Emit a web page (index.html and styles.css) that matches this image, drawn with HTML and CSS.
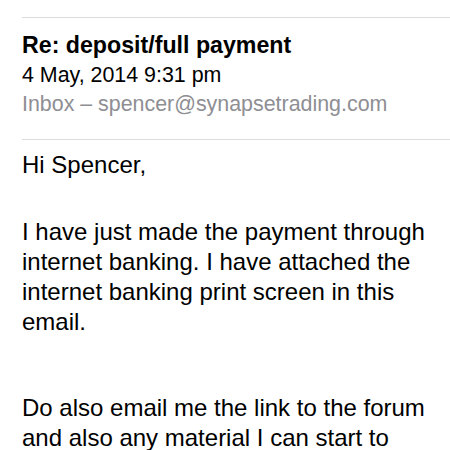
FILE: index.html
```html
<!DOCTYPE html>
<html>
<head>
<meta charset="utf-8">
<link rel="stylesheet" href="styles.css">
</head>
<body>
<div class="mail">
  <div class="header">
    <div class="subject">Re: deposit/full payment</div>
    <div class="date">4 May, 2014 9:31 pm</div>
    <div class="mailbox">Inbox – spencer@synapsetrading.com</div>
  </div>
  <div class="content">
    <p class="para greeting">Hi Spencer,</p>
    <p class="para first">I have just made the payment through internet banking. I have attached the internet banking print screen in this email.</p>
    <p class="para">Do also email me the link to the forum and also any material I can start to</p>
  </div>
</div>
</body>
</html>
```
FILE: styles.css
```css
html, body {
  margin: 0;
  padding: 0;
  background: #ffffff;
}
body {
  font-family: "Liberation Sans", Arial, sans-serif;
  color: #000000;
  overflow: hidden;
  height: 450px;
}
.mail {
  padding-top: 17px;
  padding-left: 22px;
}
.header {
  border-top: 1px solid #dcdcdc;
  border-bottom: 1px solid #dcdcdc;
  padding: 12px 0 20px 0;
}
.subject {
  font-weight: bold;
  font-size: 23.2px;
  line-height: 31px;
}
.date {
  font-size: 21.4px;
  line-height: 29px;
}
.mailbox {
  font-size: 21.4px;
  line-height: 29px;
  color: #8e8e93;
}
.content {
  padding-top: 10px;
  padding-right: 20px;
}
.para {
  margin: 0;
  font-size: 24px;
  line-height: 30px;
}
.greeting {
  margin-bottom: 37px;
}
.first {
  margin-bottom: 56px;
}
```
